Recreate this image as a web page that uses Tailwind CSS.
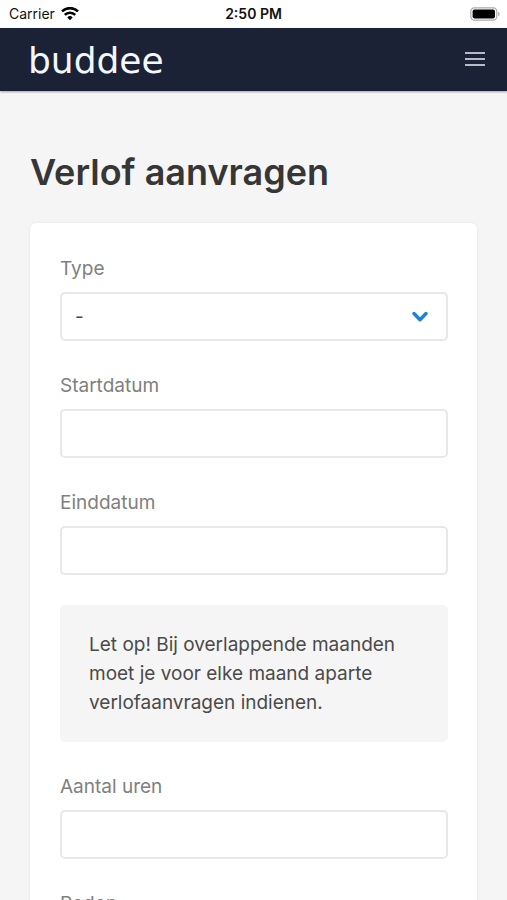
<!DOCTYPE html>
<html lang="nl">
<head>
<meta charset="utf-8">
<meta name="viewport" content="width=device-width, initial-scale=1">
<title>Verlof aanvragen</title>
<script src="https://cdn.jsdelivr.net/npm/@tailwindcss/browser@4"></script>
</head>
<body class="flex h-screen flex-col overflow-hidden bg-[#f5f5f5] font-['Inter','Liberation_Sans',sans-serif] text-[#4a4a4a]">
  <div class="grid h-7 shrink-0 grid-cols-3 items-center bg-white px-[7px] text-sm text-[#111]">
    <div class="flex items-center gap-1.5 pl-0.5">
      <span>Carrier</span>
      <svg class="h-[14px] w-[18px]" viewBox="0 0 18 14" fill="none" stroke="#000" stroke-width="2.6" aria-hidden="true">
        <path d="M1 4.400a11.4 11.4 0 0 1 16 0"/>
        <path d="M3.800 7.900a7.300 7.300 0 0 1 10.400 0"/>
        <path d="M6.3 10.4a3.9 3.9 0 0 1 5.4 0L9 13.2z" fill="#000" stroke="none"/>
      </svg>
    </div>
    <span class="text-center font-semibold">2:50 PM</span>
    <svg class="h-[14px] w-[30px] justify-self-end" viewBox="0 0 30 14" aria-hidden="true">
      <rect x="0.8" y="0.8" width="26" height="12.4" rx="3.6" fill="#fff" stroke="#aaa" stroke-width="1.2"/>
      <rect x="2.6" y="2.6" width="22.4" height="8.8" rx="1.8" fill="#000"/>
      <path d="M28.2 4.8c2 .8 2 3.600 0 4.400z" fill="#aaa"/>
    </svg>
  </div>

  <header class="flex h-[63px] shrink-0 items-center justify-between bg-[#1b2236] pr-[21px] pb-px pl-7 shadow-[0_1px_2px_rgba(27,34,54,0.4)]">
    <a href="#" class="pt-1 font-['DejaVu_Sans',sans-serif] text-4xl text-[#f3f7fc]">buddee</a>
    <button type="button" aria-label="Menu">
      <svg class="h-5 w-[22px]" viewBox="0 0 22 20" stroke="#b4bac6" stroke-width="1.8" aria-hidden="true">
        <path d="M1 4h20M1 10h20M1 16h20"/>
      </svg>
    </button>
  </header>

  <main class="flex-1 overflow-y-auto px-[30px] pt-[57px] [scrollbar-width:none]">
    <h1 class="text-4xl leading-[48px] font-semibold text-[#363636]">Verlof aanvragen</h1>
    <form class="mt-[27px] flex flex-col gap-[30px] rounded-md bg-white py-[31px] pr-[29px] pl-[30px] text-[19px] leading-[29px] shadow-[0_0_3px_rgba(0,0,0,0.08)]">
      <div class="flex flex-col gap-[9px]">
        <label for="type" class="text-[#808080]">Type</label>
        <div class="relative">
          <select id="type" class="h-[49px] w-full appearance-none rounded-[5px] border-2 border-[#e8e8e8] bg-white px-[13px]">
            <option>-</option>
          </select>
          <svg class="pointer-events-none absolute top-[19px] right-5 h-3 w-4" viewBox="0 0 16 12" fill="none" stroke="#1c84d8" stroke-width="3.400" stroke-linecap="round" stroke-linejoin="round" aria-hidden="true">
            <path d="M2 2.500L8 8.700l6-6.200"/>
          </svg>
        </div>
      </div>
      <div class="flex flex-col gap-[9px]">
        <label for="start" class="text-[#808080]">Startdatum</label>
        <input id="start" type="text" class="h-[49px] w-full rounded-[5px] border-2 border-[#e8e8e8] bg-white px-[13px]">
      </div>
      <div class="flex flex-col gap-[9px]">
        <label for="eind" class="text-[#808080]">Einddatum</label>
        <input id="eind" type="text" class="h-[49px] w-full rounded-[5px] border-2 border-[#e8e8e8] bg-white px-[13px]">
      </div>
      <p class="rounded-[5px] bg-[#f5f5f5] px-[29px] py-[25px]">Let op! Bij overlappende maanden moet je voor elke maand aparte verlofaanvragen indienen.</p>
      <div class="flex flex-col gap-[9px]">
        <label for="uren" class="text-[#808080]">Aantal uren</label>
        <input id="uren" type="text" class="h-[49px] w-full rounded-[5px] border-2 border-[#e8e8e8] bg-white px-[13px]">
      </div>
      <div class="flex flex-col gap-[9px]">
        <label for="reden" class="text-[#808080]">Reden</label>
        <input id="reden" type="text" class="h-[49px] w-full rounded-[5px] border-2 border-[#e8e8e8] bg-white px-[13px]">
      </div>
    </form>
  </main>
</body>
</html>
